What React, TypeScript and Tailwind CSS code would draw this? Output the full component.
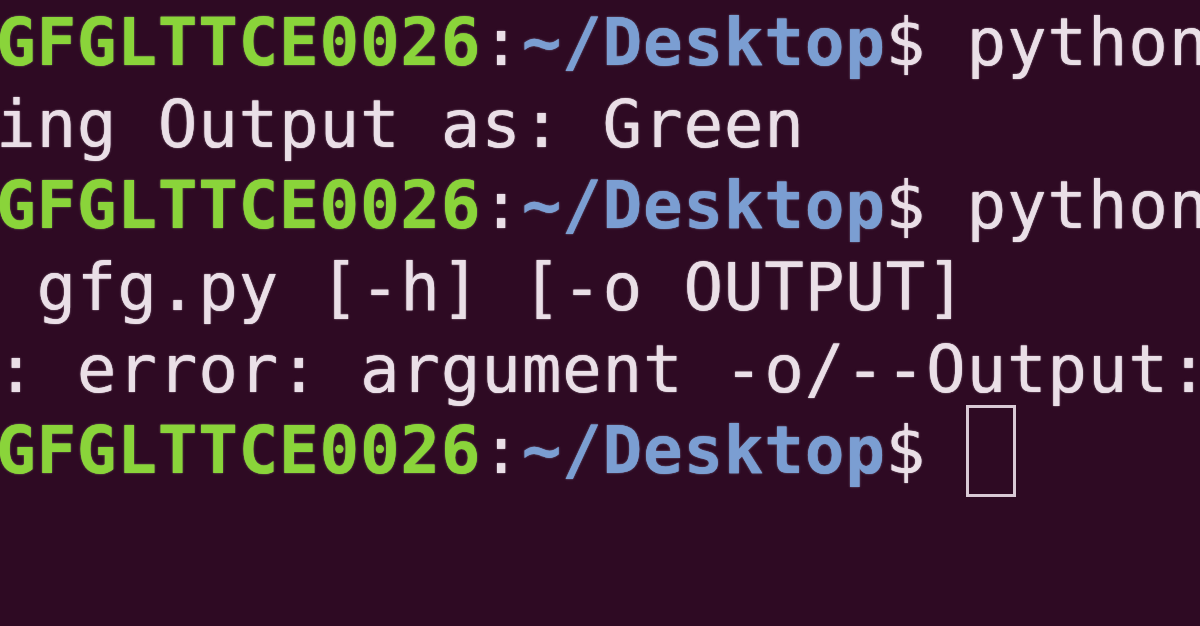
const prompt = (
  <>
    <span className="font-bold text-[#8ad43a]">GFGLTTCE0026</span>
    <span className="text-[#eadfe7]">:</span>
    <span className="font-bold text-[#7b9ed2]">~/Desktop</span>
    <span className="text-[#eadfe7]">$ </span>
  </>
);

const Line = ({ children }: { children: React.ReactNode }) => (
  <div className="flex h-[81.6px] items-center whitespace-pre">{children}</div>
);

export default function App() {
  return (
    <div className="h-[626px] w-[1200px] overflow-hidden bg-[#2e0a23]">
      <div
        className="-ml-[4px] mt-[2px] text-[66px] tracking-[0.7px] text-[#eadfe7] [text-shadow:0_0_1px_currentColor,0_0_3px_rgba(234,223,231,0.25)]"
        style={{ fontFamily: '"DejaVu Sans Mono", monospace' }}
      >
        <Line>
          {prompt}
          <span>python3 gfg.py -o Green</span>
        </Line>
        <Line>ing Output as: Green</Line>
        <Line>
          {prompt}
          <span>python3 gfg.py -o</span>
        </Line>
        <Line> gfg.py [-h] [-o OUTPUT]</Line>
        <Line>: error: argument -o/--Output: expected one argument</Line>
        <Line>
          {prompt}
          <span className="h-[92px] w-[50px] shrink-0 border-[3px] border-[#d9c9d5]" />
        </Line>
      </div>
    </div>
  );
}
